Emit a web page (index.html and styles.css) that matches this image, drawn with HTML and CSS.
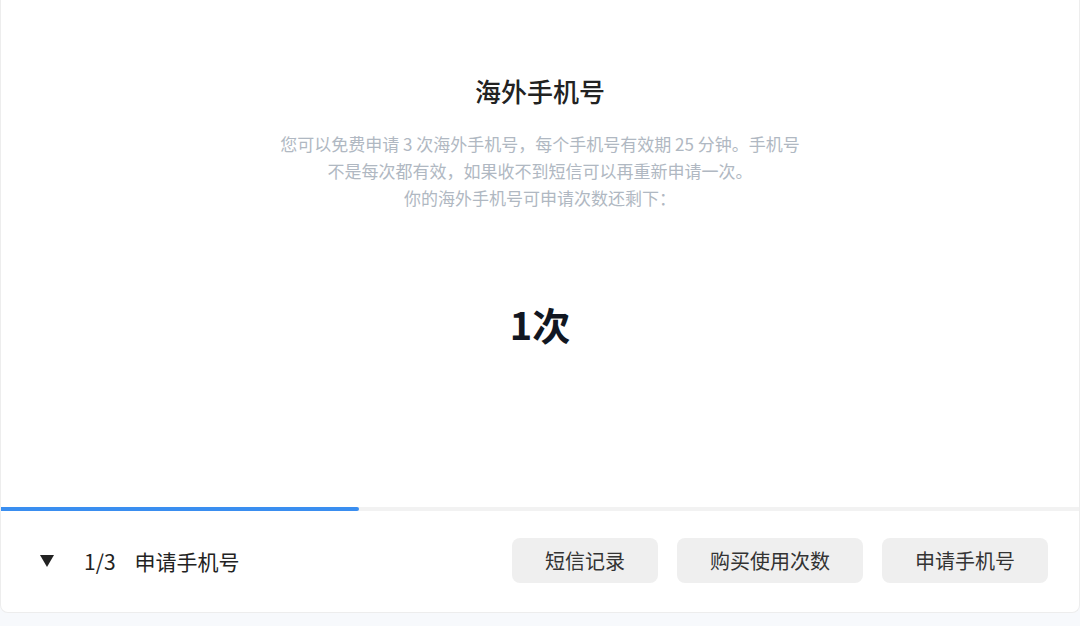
FILE: index.html
```html
<!DOCTYPE html>
<html lang="zh-CN">
<head>
<meta charset="utf-8">
<title>海外手机号</title>
<link rel="stylesheet" href="styles.css">
</head>
<body>
<div class="card">
  <main class="main">
    <h1 class="title">海外手机号</h1>
    <p class="desc">您可以免费申请 3 次海外手机号，每个手机号有效期 25 分钟。手机号<br>不是每次都有效，如果收不到短信可以再重新申请一次。<br>你的海外手机号可申请次数还剩下：</p>
    <div class="count">1次</div>
  </main>
  <div class="progress"><div class="progress-fill" style="width:33.2%"></div></div>
  <footer class="bar">
    <div class="step">
      <svg class="tri" width="14" height="12" viewBox="0 0 14 12"><polygon points="0,0 14,0 7,12" fill="#222"/></svg>
      <span class="step-num">1/3</span>
      <span class="step-name">申请手机号</span>
    </div>
    <div class="actions">
      <button class="btn">短信记录</button>
      <button class="btn">购买使用次数</button>
      <button class="btn">申请手机号</button>
    </div>
  </footer>
</div>
</body>
</html>
```

FILE: styles.css
```css
* { box-sizing: border-box; }
html, body { margin: 0; padding: 0; }
body {
  background: #f7f9fc;
  font-family: "Noto Sans CJK SC", "Noto Sans", sans-serif;
  width: 1080px;
  height: 626px;
  overflow: hidden;
}
.card {
  height: 613px;
  background: #fff;
  border: 1px solid #ededed;
  border-top: none;
  border-radius: 0 0 8px 8px;
  display: flex;
  flex-direction: column;
}
.main {
  flex: 1;
  display: flex;
  flex-direction: column;
  align-items: center;
  padding-top: 73px;
}
.title {
  margin: 0;
  font-size: 26px;
  line-height: 36px;
  font-weight: 500;
  color: #222;
}
.desc {
  margin: 21px 0 0;
  font-size: 17px;
  line-height: 27px;
  color: #b0b8c2;
  text-align: center;
}
.count {
  margin-top: 87px;
  font-size: 38px;
  line-height: 52px;
  font-weight: 700;
  color: #111722;
}
.progress {
  height: 4px;
  background: #f2f2f2;
  flex-shrink: 0;
}
.progress-fill {
  height: 100%;
  background: #3a8ef0;
  border-radius: 0 3px 3px 0;
}
.bar {
  height: 101px;
  flex-shrink: 0;
  display: flex;
  align-items: center;
  justify-content: space-between;
  padding: 0 31px 2px 39px;
}
.step {
  display: flex;
  align-items: center;
  font-size: 21px;
  color: #222;
}
.tri { display: block; margin-right: 30px; }
.step-num { margin-right: 19px; }
.actions {
  display: flex;
  gap: 19px;
}
.btn {
  height: 45px;
  padding: 0 33px;
  border: none;
  border-radius: 8px;
  background: #efefef;
  color: #333;
  font-family: inherit;
  font-size: 20px;
  line-height: 45px;
}
```
